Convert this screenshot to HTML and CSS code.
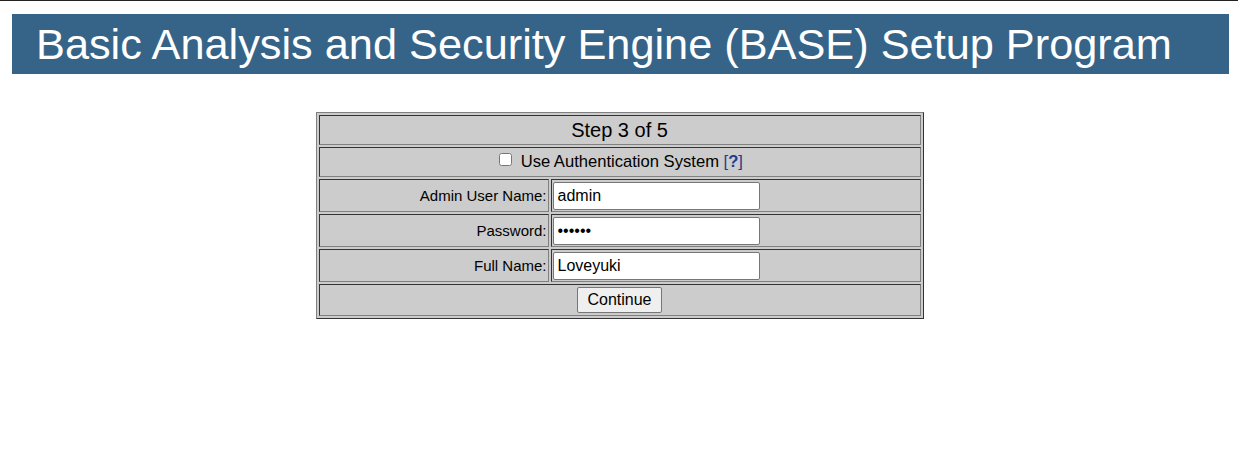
FILE: index.html
```html
<!DOCTYPE html>
<html>
<head>
<meta charset="utf-8">
<title>BASE Setup</title>
<link rel="stylesheet" href="styles.css">
</head>
<body>
<div class="topline"></div>
<div class="page">
  <div class="header">Basic Analysis and Security Engine (BASE) Setup Program</div>
  <form class="setup">
    <table class="box">
      <tr><td colspan="2" class="title">Step 3 of 5</td></tr>
      <tr><td colspan="2" class="center auth"><input type="checkbox" class="chk"> Use Authentication System <a href="#" class="help">[<b>?</b>]</a></td></tr>
      <tr><td class="label">Admin User Name:</td><td class="field"><input type="text" value="admin"></td></tr>
      <tr><td class="label">Password:</td><td class="field"><input type="password" value="secret"></td></tr>
      <tr><td class="label">Full Name:</td><td class="field"><input type="text" value="Loveyuki"></td></tr>
      <tr><td colspan="2" class="center"><button type="button" class="btn">Continue</button></td></tr>
    </table>
  </form>
</div>
</body>
</html>
```

FILE: styles.css
```css
html, body {
  margin: 0;
  padding: 0;
  background: #fff;
  font-family: "Liberation Sans", Arial, sans-serif;
}
.topline {
  height: 1px;
  background: #222;
}
.page {
  padding: 13px 9px 0 12px;
}
.header {
  background: #366488;
  color: #fff;
  font-size: 43.3px;
  height: 60px;
  line-height: 60px;
  padding-left: 24px;
  white-space: nowrap;
}
.setup {
  margin: 38px 0 0 0;
}
.box {
  margin: 0 auto;
  width: 608px;
  position: relative;
  left: -1px;
  border-collapse: separate;
  border-spacing: 2px;
  border: 1px solid;
  border-color: #808080 #333 #333 #808080;
  background: #ccc;
}
.box td {
  border: 1px solid;
  border-color: #333 #808080 #808080 #333;
  padding: 1px;
  font-size: 15px;
  color: #000;
}
.title {
  text-align: center;
  font-size: 20px !important;
  height: 26px;
}
.center {
  text-align: center;
}
.auth {
  font-size: 16.6px !important;
  height: 26px;
}
.chk {
  margin: 0 4px 0 3px;
  width: 13px;
  height: 13px;
  vertical-align: 1px;
}
.help {
  color: #1f3c8f;
  text-decoration: none;
}
.label {
  text-align: right;
  width: 226px;
  height: 29px;
}
.field input {
  font-family: "Liberation Sans", Arial, sans-serif;
  font-size: 16px;
  padding: 1px 4px;
  border: 1px solid #767676;
  border-radius: 2px;
  background: #fff;
  box-sizing: border-box;
  height: 28px;
  width: 207px;
  display: block;
  margin: 0;
}
.btn {
  font-family: "Liberation Sans", Arial, sans-serif;
  font-size: 16px;
  padding: 2px 9px;
  background: #efefef;
  border: 1px solid #767676;
  border-radius: 2px;
  height: 26px;
  margin: 1px 0;
}
```
